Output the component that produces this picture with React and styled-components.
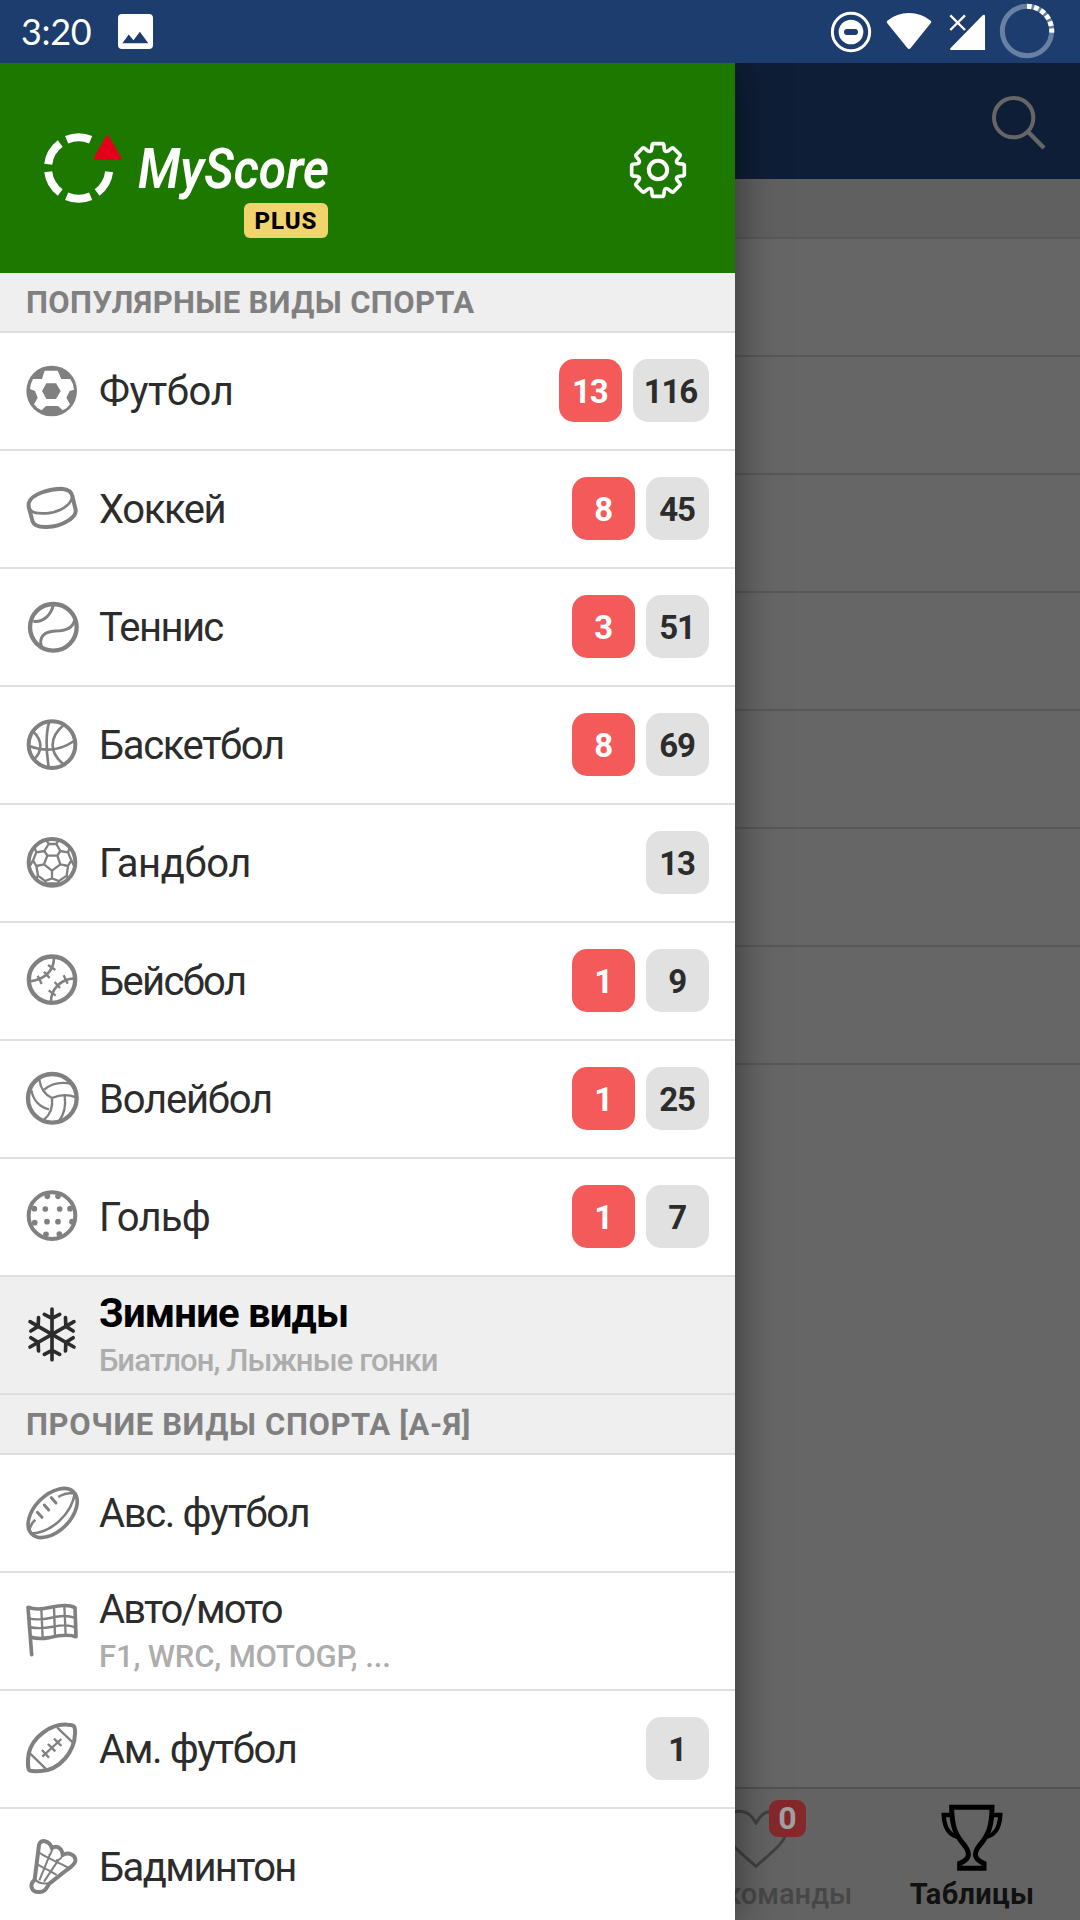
import styled, { createGlobalStyle } from "styled-components";

const GlobalStyle = createGlobalStyle`
	* {
		box-sizing: border-box;
	}
	body {
		margin: 0;
		background-color: #ffffff;
		font-family: Roboto, "Liberation Sans", sans-serif;
	}
`;

const Screen = styled.div`
	display: flex;
	flex-direction: column;
	width: 1080px;
	height: 1920px;
	overflow: hidden;
`;

/* status bar */
const StatusBar = styled.div`
	display: flex;
	align-items: center;
	flex: none;
	height: 63px;
	padding: 0 25px 0 21px;
	background-color: #1c3d6d;
	color: white;
`;
const Clock = styled.span`
	font-family: Lato, Roboto, sans-serif;
	font-size: 36px;
	line-height: 63px;
	letter-spacing: -0.3px;
	width: 97px;
`;
const StatusIcons = styled.div`
	display: flex;
	gap: 13px;
	margin-left: auto;
	svg {
		overflow: visible;
	}
`;

/* page under the drawer */
const Body = styled.div`
	position: relative;
	flex: 1;
	min-height: 0;
`;
const Page = styled.div`
	display: flex;
	flex-direction: column;
	height: 100%;
	background-color: white;
`;
const AppBar = styled.div`
	display: flex;
	align-items: center;
	justify-content: flex-end;
	flex: none;
	height: 116px;
	padding: 3px 34px 0 0;
	background-color: #264d8a;
`;
const PageSection = styled.div`
	flex: none;
	height: 60px;
	background-color: #efefef;
	border-bottom: 2px solid #dcdcdc;
`;
const PageRow = styled.div`
	flex: none;
	height: 118px;
	border-bottom: 2px solid #dcdcdc;
`;
const TabBar = styled.div`
	display: flex;
	justify-content: flex-end;
	height: 133px;
	margin-top: auto;
	border-top: 2px solid #cacaca;
	background-color: #f8f8f8;
`;
const Tab = styled.div`
	position: relative;
	display: flex;
	flex-direction: column;
	align-items: center;
	width: 216px;
	padding-top: 14px;
	color: ${(props) => (props.$active ? "#2c2c2c" : "#b2b2b2")};
	font-weight: ${(props) => (props.$active ? 700 : 500)};
`;
const TabLabel = styled.span`
	font-size: 29px;
	line-height: 36px;
	margin-top: 3px;
	white-space: nowrap;
	letter-spacing: ${(props) => props.$spacing || 0}px;
`;
const TabBadge = styled.span`
	position: absolute;
	z-index: 2;
	left: 121px;
	top: 11px;
	width: 37px;
	height: 37px;
	border-radius: 9px;
	background-color: #85282b;
	color: #a0a0a0;
	font-size: 32px;
	font-weight: 700;
	line-height: 37px;
	text-align: center;
`;
const Scrim = styled.div`
	position: absolute;
	inset: 0;
	z-index: 1;
	background-color: rgba(0, 0, 0, 0.6);
`;

/* drawer */
const Drawer = styled.div`
	position: absolute;
	z-index: 3;
	left: 0;
	top: 0;
	bottom: 0;
	width: 735px;
	background-color: white;
	box-shadow: 0 0 40px rgba(0, 0, 0, 0.5);
	clip-path: inset(0 -60px 0 0);
`;
const DrawerHeader = styled.div`
	display: flex;
	align-items: flex-start;
	height: 210px;
	padding: 70px 46px 0 44px;
	background-color: #1d7800;
`;
const Wordmark = styled.div`
	display: flex;
	flex-direction: column;
	align-items: flex-end;
	width: 190px;
	margin-left: 16px;
`;
const BrandName = styled.span`
	align-self: flex-start;
	color: white;
	font-size: 55px;
	font-style: italic;
	font-weight: 600;
	line-height: 72px;
	height: 70px;
	transform: scaleX(0.905);
	transform-origin: left;
`;
const PlusTag = styled.span`
	width: 84px;
	height: 35px;
	border-radius: 6px;
	background-color: #f1d46c;
	color: black;
	font-size: 24px;
	font-weight: 800;
	letter-spacing: 1px;
	line-height: 37px;
	text-align: center;
`;
const SettingsButton = styled.div`
	display: flex;
	margin: 6px 0 0 auto;
`;
const SectionTitle = styled.div`
	height: 60px;
	padding-left: 26px;
	border-bottom: 2px solid #dddddd;
	background-color: #efefef;
	color: #808080;
	font-size: 31px;
	font-weight: 700;
	line-height: 59px;
	white-space: nowrap;
	letter-spacing: ${(props) => props.$spacing || 0}px;
`;
const SportRow = styled.div`
	display: flex;
	align-items: center;
	gap: 11px;
	height: 118px;
	padding: 0 26px 0 24px;
	border-bottom: 2px solid #dfdfdf;
	background-color: ${(props) => (props.$active ? "#efefef" : "white")};
	color: ${(props) => (props.$active ? "#2c2c2c" : "#808080")};
`;
const SportText = styled.div`
	display: flex;
	flex-direction: column;
	flex: 1;
	padding: ${(props) => (props.$double ? "5px 0 0 8px" : "2px 0 0 8px")};
	white-space: nowrap;
`;
const SportName = styled.span`
	color: ${(props) => (props.$active ? "#000000" : "#2c2c2c")};
	font-size: 40px;
	font-weight: ${(props) => (props.$active ? 700 : 400)};
	line-height: 46px;
	letter-spacing: ${(props) => props.$spacing || 0}px;
`;
const SportHint = styled.span`
	color: #adadad;
	font-size: 31px;
	font-weight: 500;
	line-height: 47px;
	letter-spacing: ${(props) => props.$spacing || 0}px;
`;
const Count = styled.span`
	min-width: 63px;
	height: 63px;
	margin-bottom: 1px;
	padding: 0 12px 0 11px;
	border-radius: 15px;
	background-color: #e1e1e1;
	color: #2c2c2c;
	font-size: 33px;
	font-weight: 700;
	line-height: 65px;
	letter-spacing: -1.2px;
	text-align: center;
`;
const LiveCount = styled(Count)`
	background-color: #f45a5a;
	color: white;
`;

const Drawing = styled.svg`
	flex: none;
	fill: none;
	stroke: currentColor;
	stroke-width: ${(props) => props.$line || 7};
	stroke-linecap: ${(props) => (props.$round ? "round" : "butt")};
	stroke-linejoin: round;
`;

function SportIcon({ children, ...rest }) {
	return (
		<Drawing width="56" height="56" viewBox="0 0 168 168" {...rest}>
			{children}
		</Drawing>
	);
}

const SoccerIcon = () => (
	<SportIcon>
		<circle cx="83" cy="84" r="76" fill="currentColor" stroke="none" />
		<path
			d="M62 23H101L112 48H139Q149 62 150 80L137 84L127 104L138 124Q130 136 116 142L102 129H66L53 142Q38 136 30 124L41 104L33 84L18 78Q20 60 27 48H54Z"
			fill="white"
			stroke="none"
		/>
		<path d="M54 84L67 61H96L110 84L96 108H67Z" fill="currentColor" stroke="none" />
	</SportIcon>
);

const PuckIcon = () => (
	<SportIcon $line={8}>
		<path
			d="M14 67C20 39 78 23 113 23C133 25 143 33 145 45L155 87C158 107 118 137 68 138C43 139 30 133 26 122L14 77Z"
			strokeWidth="12"
		/>
		<path d="M14 77C20 97 38 98 68 97C108 93 143 72 145 45" />
	</SportIcon>
);

const TennisIcon = () => (
	<SportIcon $line={9}>
		<circle cx="88" cy="85" r="70" strokeWidth="13" />
		<path d="M88 18C82 44 62 70 28 67M52 144C44 112 62 98 93 96C128 96 148 84 152 62" />
	</SportIcon>
);

const BasketballIcon = () => (
	<SportIcon $line={8}>
		<circle cx="84" cy="83" r="70" strokeWidth="12" />
		<path d="M75 16C65 52 67 104 74 150M16 87C60 104 108 101 150 72M28 44C56 70 56 104 29 128M119 24C76 60 74 106 118 141" />
	</SportIcon>
);

const HandballIcon = () => (
	<SportIcon $line={7}>
		<circle cx="84" cy="82" r="70" strokeWidth="12" />
		<path d="M70 62H100L109 88L84 107L60 88ZM70 62L61 48L74 27H97L109 48L100 62M61 48L37 52L27 76L37 93L60 88M109 48L132 52L142 76L132 93L109 88M84 107V130L63 138L42 122L37 93M84 130L105 138L128 122L132 93" />
		<path d="M74 27L68 17M97 27L103 17M37 52L31 36M132 52L138 36M27 76L18 92M142 76L150 92M63 138L66 145H102L105 138M42 122L36 132M128 122L133 132" />
	</SportIcon>
);

const BaseballIcon = () => (
	<SportIcon $line={8}>
		<circle cx="84" cy="80" r="69.5" strokeWidth="13" />
		<path d="M90 14C90 56 58 81 16 85M152 76C108 78 80 111 81 148" />
		<path
			d="M72 36L94 51M60 56L77 75M41 68L53 93M119 67L131 92M92 87L108 105M74 112L95 128"
			strokeWidth="7"
		/>
	</SportIcon>
);

const VolleyballIcon = () => (
	<SportIcon>
		<circle cx="85" cy="82" r="73" strokeWidth="13" />
		<path d="M46 26C50 52 63 72 84 81C104 72 128 68 156 79M84 81C87 107 78 131 60 146M61 56C84 36 112 32 144 39M22 58C28 88 48 109 75 115M122 75C126 102 121 129 105 150" />
	</SportIcon>
);

const golfDots = [
	[64, 60],
	[107, 60],
	[69, 98],
	[102, 98],
	[70, 22],
	[102, 22],
	[31, 59],
	[138, 59],
	[32, 101],
	[144, 98],
	[66, 136],
	[106, 135],
];
const GolfIcon = () => (
	<SportIcon>
		<circle cx="84" cy="80" r="70" strokeWidth="12" />
		{golfDots.map(([x, y]) => (
			<circle key={`${x}-${y}`} cx={x} cy={y} r="8.5" fill="currentColor" stroke="none" />
		))}
	</SportIcon>
);

const SnowflakeIcon = () => (
	<SportIcon $line={11} $round>
		{[0, 60, 120, 180, 240, 300].map((angle) => (
			<path
				key={angle}
				d="M84 82V6M61 22L84 34L107 22"
				transform={`rotate(${angle} 84 82)`}
			/>
		))}
	</SportIcon>
);

const AussieBallIcon = () => (
	<SportIcon $line={8}>
		<ellipse cx="86" cy="84" rx="89" ry="54" transform="rotate(-45 86 84)" strokeWidth="11" />
		<path d="M153 22C144 85 84 144 18 146M15 140C18 124 24 112 34 104M103 36C118 26 132 24 148 24" />
		<path d="M82 38L96 54M61 60L74 75M40 82L54 97" strokeWidth="9" strokeLinecap="round" />
	</SportIcon>
);

const FlagIcon = () => (
	<SportIcon>
		<path
			d="M23 155L12 13C30 20 55 19 80 13C110 6 135 4 153 14L156 101C130 92 100 98 75 104C50 109 32 106 19 102"
			strokeWidth="11"
			strokeLinecap="round"
		/>
		<path d="M52 18L56 107M90 11L93 101M121 8L125 96M14 46C60 58 85 38 120 39C135 40 145 41 154 45M16 72C60 84 90 66 122 67C137 68 148 70 155 74" />
	</SportIcon>
);

const FootballIcon = () => (
	<SportIcon>
		<path
			d="M18 149C11 147 11 120 14 98C24 50 78 8 130 11C150 11 154 14 153 38C152 90 108 148 50 150C32 151 24 151 18 149Z"
			strokeWidth="12"
		/>
		<path d="M100 20L146 64M18 97L65 143M55 107L112 54M54 87L75 110M72 69L94 91M90 53L112 75" />
	</SportIcon>
);

const ShuttlecockIcon = () => (
	<SportIcon $line={6}>
		<path
			d="M32 122L45 18C48 0 76 2 84 28C96 18 114 24 116 48C134 38 156 48 154 66C152 78 140 84 128 93L76 134C66 150 62 159 46 159C20 160 16 136 32 122Z"
			strokeWidth="12"
		/>
		<path d="M32 120C42 132 58 136 76 132M46 124L78 46M60 128L104 62M44 40C62 54 96 66 132 86M40 76C56 86 76 94 98 108M84 28C84 38 80 46 74 50M116 48C112 58 104 64 96 64" />
	</SportIcon>
);

/* one tooth of the gear, repeated every 45 degrees */
const gearTooth = [
	[-14, -60],
	[-22, -79],
	[-14, -79],
	[14, -79],
	[22, -79],
	[14, -60],
	[23, -56],
];
const turn = ([x, y], angle) => {
	const c = Math.cos(angle);
	const s = Math.sin(angle);
	return `${(x * c - y * s).toFixed(1)} ${(x * s + y * c).toFixed(1)}`;
};
const gearPath =
	"M-23 -56" +
	Array.from({ length: 8 }, (_, i) => {
		const p = gearTooth.map((point) => turn(point, (i * Math.PI) / 4));
		return `C${p[0]} ${p[1]} ${p[2]}L${p[3]}C${p[4]} ${p[5]} ${p[6]}`;
	}).join("") +
	"Z";

const GearIcon = () => (
	<Drawing width="62" height="62" viewBox="-93 -93 186 186" $line={11} color="white">
		<path d={gearPath} />
		<circle r="27.5" strokeWidth="12" />
	</Drawing>
);

const LogoMark = () => (
	<Drawing width="78" height="70" viewBox="134 399 234 210" $line={24} color="white">
		{[0, 120, 180, 240, 300].map((angle) => (
			<path
				key={angle}
				d="M-36 -84.7A92 92 0 0 1 36 -84.7"
				transform={`translate(238 504) rotate(${angle})`}
			/>
		))}
		<path d="M324 413L360 474H290Z" fill="#e2001a" stroke="#e2001a" strokeWidth="12" />
	</Drawing>
);

const ImageIcon = () => (
	<svg width="35" height="35" viewBox="355 42 104 104">
		<rect x="355" y="42" width="104" height="104" rx="12" fill="white" />
		<path d="M368 129L387 103L401 120L420 95L445 129Z" fill="#1c3d6d" />
	</svg>
);

const DoNotDisturbIcon = () => (
	<svg width="42" height="63" viewBox="810 0 126 189">
		<circle cx="873" cy="96" r="56" fill="none" stroke="white" strokeWidth="9" />
		<circle cx="873" cy="96" r="37" fill="white" />
		<rect x="852" y="87" width="42" height="18" rx="9" fill="#1c3d6d" />
	</svg>
);
const WifiIcon = () => (
	<svg width="48" height="63" viewBox="975 0 144 189">
		<path
			d="M982 62Q1010 39 1047 39T1112 62Q1116 65 1112 70L1052 144Q1047 150 1042 144L982 70Q978 65 982 62Z"
			fill="white"
		/>
	</svg>
);
const SignalIcon = () => (
	<svg width="41" height="63" viewBox="1158 0 123 189">
		<path d="M1172 144L1268 46Q1275 42 1275 49V150H1174Q1167 149 1172 144Z" fill="white" />
		<path d="M1171 46L1215 90M1215 46L1171 90" stroke="white" strokeWidth="7" />
	</svg>
);
const BatteryIcon = () => (
	<svg width="55" height="63" viewBox="1320 0 165 189">
		<g fill="none" strokeWidth="15">
			<circle cx="1401" cy="93" r="74" stroke="#6980a5" />
			<path d="M1401 19A74 74 0 0 1 1475 98" stroke="white" strokeDasharray="14 7.6" />
		</g>
	</svg>
);

const SearchIcon = () => (
	<Drawing width="54" height="54" viewBox="1296 287 162 162" $line={12} color="white">
		<circle cx="1361" cy="352" r="59" />
		<path d="M1404 394L1452 443" strokeWidth="13" />
	</Drawing>
);
const HeartIcon = () => (
	<Drawing width="66" height="70" viewBox="99 305 198 210" $line={9} color="#a2a2a2">
		<path d="M198 366C186 342 168 330 148 330C124 330 106 352 106 382C106 422 150 452 198 495C246 452 290 422 290 382C290 352 272 330 248 330C228 330 210 342 198 366Z" />
	</Drawing>
);
const TrophyIcon = () => (
	<Drawing width="66" height="70" viewBox="746 309 198 210" $line={15} color="black">
		<path
			d="M784 322H905C905 380 893 408 866 438C846 464 856 480 881 490V505H808V490C834 480 843 464 824 438C797 408 784 380 784 322Z"
			strokeLinejoin="miter"
		/>
		<path
			d="M784 345H760C762 385 778 408 808 412M905 345H930C928 385 912 408 882 412"
			strokeLinejoin="miter"
			strokeWidth="13"
		/>
	</Drawing>
);

const popular = [
	{ name: "Футбол", icon: SoccerIcon, live: 13, total: 116, spacing: -0.4 },
	{ name: "Хоккей", icon: PuckIcon, live: 8, total: 45, spacing: -1.4 },
	{ name: "Теннис", icon: TennisIcon, live: 3, total: 51, spacing: -1.6 },
	{ name: "Баскетбол", icon: BasketballIcon, live: 8, total: 69, spacing: -1.4 },
	{ name: "Гандбол", icon: HandballIcon, total: 13, spacing: -0.4 },
	{ name: "Бейсбол", icon: BaseballIcon, live: 1, total: 9, spacing: -1.7 },
	{ name: "Волейбол", icon: VolleyballIcon, live: 1, total: 25, spacing: -1.2 },
	{ name: "Гольф", icon: GolfIcon, live: 1, total: 7, spacing: -0.8 },
	{
		name: "Зимние виды",
		icon: SnowflakeIcon,
		hint: "Биатлон, Лыжные гонки",
		active: true,
		spacing: -0.8,
		hintSpacing: -0.9,
	},
];

const others = [
	{ name: "Авс. футбол", icon: AussieBallIcon, spacing: -1.35 },
	{
		name: "Авто/мото",
		icon: FlagIcon,
		hint: "F1, WRC, MOTOGP, ...",
		spacing: -1.9,
		hintSpacing: -0.15,
	},
	{ name: "Ам. футбол", icon: FootballIcon, total: 1, spacing: -1.35 },
	{ name: "Бадминтон", icon: ShuttlecockIcon, spacing: -1.6 },
];

function Sport({ name, icon: Icon, hint, live, total, active, spacing, hintSpacing }) {
	return (
		<SportRow $active={active}>
			<Icon />
			<SportText $double={Boolean(hint)}>
				<SportName $active={active} $spacing={spacing}>
					{name}
				</SportName>
				{hint && <SportHint $spacing={hintSpacing}>{hint}</SportHint>}
			</SportText>
			{live && <LiveCount>{live}</LiveCount>}
			{total && <Count>{total}</Count>}
		</SportRow>
	);
}

function App() {
	return (
		<Screen>
			<GlobalStyle />
			<StatusBar>
				<Clock>3:20</Clock>
				<ImageIcon />
				<StatusIcons>
					<DoNotDisturbIcon />
					<WifiIcon />
					<SignalIcon />
					<BatteryIcon />
				</StatusIcons>
			</StatusBar>
			<Body>
				<Page>
					<AppBar>
						<SearchIcon />
					</AppBar>
					<PageSection />
					{Array.from({ length: 7 }, (_, i) => (
						<PageRow key={i} />
					))}
					<TabBar>
						<Tab>
							<HeartIcon />
							<TabBadge>0</TabBadge>
							<TabLabel>Мои команды</TabLabel>
						</Tab>
						<Tab $active>
							<TrophyIcon />
							<TabLabel $spacing={0.3}>Таблицы</TabLabel>
						</Tab>
					</TabBar>
				</Page>
				<Scrim />
				<Drawer>
					<DrawerHeader>
						<LogoMark />
						<Wordmark>
							<BrandName>MyScore</BrandName>
							<PlusTag>PLUS</PlusTag>
						</Wordmark>
						<SettingsButton>
							<GearIcon />
						</SettingsButton>
					</DrawerHeader>
					<SectionTitle $spacing={0.4}>ПОПУЛЯРНЫЕ ВИДЫ СПОРТА</SectionTitle>
					{popular.map((sport) => (
						<Sport key={sport.name} {...sport} />
					))}
					<SectionTitle $spacing={0.65}>ПРОЧИЕ ВИДЫ СПОРТА [А-Я]</SectionTitle>
					{others.map((sport) => (
						<Sport key={sport.name} {...sport} />
					))}
				</Drawer>
			</Body>
		</Screen>
	);
}

export default App;
